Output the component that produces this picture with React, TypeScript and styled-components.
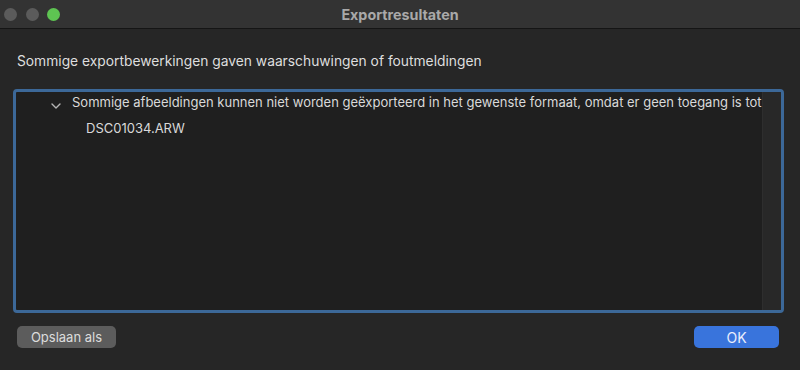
import React from "react";
import styled, { createGlobalStyle } from "styled-components";

const Global = createGlobalStyle`
  html, body { margin: 0; padding: 0; background: #262626; }
  body { font-family: Inter, "Noto Sans", "Liberation Sans", sans-serif; -webkit-font-smoothing: antialiased; }
`;

const Window = styled.div`
  width: 800px;
  height: 370px;
  display: flex;
  flex-direction: column;
  background: #262626;
  overflow: hidden;
`;

const TitleBar = styled.div`
  height: 28px;
  flex: none;
  background: #333333;
  border-bottom: 1px solid #151515;
  display: flex;
  align-items: center;
  position: relative;
  padding-left: 4px;
`;

const Lights = styled.div`
  display: flex;
  gap: 8.5px;
`;

const Light = styled.span<{ $color: string }>`
  width: 13px;
  height: 13px;
  border-radius: 50%;
  background: ${(p) => p.$color};
`;

const Title = styled.div`
  position: absolute;
  left: 0;
  right: 0;
  top: 0;
  bottom: 0;
  display: flex;
  align-items: center;
  justify-content: center;
  font-weight: 700;
  font-size: 14.3px;
  color: #a9a9a9;
  pointer-events: none;
`;

const Body = styled.div`
  flex: 1;
  display: flex;
  flex-direction: column;
  padding: 0 16px 0 13px;
`;

const Message = styled.div`
  font-size: 13.8px;
  color: #dedede;
  padding: 24px 0 0 4px;
  height: 36px;
  box-sizing: border-box;
  line-height: 16px;
`;

const ListBox = styled.div`
  margin-top: 24px;
  height: 224px;
  box-sizing: border-box;
  border: 3px solid #3c6898;
  border-radius: 4px;
  background: #1f1f1f;
  display: flex;
  overflow: hidden;
`;

const ListContent = styled.div`
  flex: 1;
  min-width: 0;
  overflow: hidden;
`;

const Scroller = styled.div`
  width: 18px;
  flex: none;
  background: #282828;
  border-left: 1px solid #2e2e2e;
`;

const Row = styled.div<{ $indent: number }>`
  display: flex;
  align-items: flex-start;
  height: 26px;
  line-height: 20px;
  padding-left: ${(p) => p.$indent}px;
  font-size: 13px;
  color: #d9d9d9;
  white-space: nowrap;
`;

const Chevron = styled.svg`
  width: 10px;
  height: 6px;
  margin: 11px 11px 0 0;
  flex: none;
`;

const Footer = styled.div`
  display: flex;
  justify-content: space-between;
  padding: 13px 5px 0 4px;
`;

const Button = styled.button<{ $primary?: boolean }>`
  height: 22px;
  border: none;
  border-radius: 5px;
  font-family: inherit;
  font-size: ${(p) => (p.$primary ? "14px" : "13px")};
  color: ${(p) => (p.$primary ? "#e9eefc" : "#dcdcdc")};
  background: ${(p) => (p.$primary ? "#3974dc" : "#5c5c5c")};
  width: ${(p) => (p.$primary ? "85px" : "99px")};
  padding: 0;
  display: flex;
  align-items: center;
  justify-content: center;
`;

export default function App() {
  return (
    <>
      <Global />
      <Window>
        <TitleBar>
          <Lights>
            <Light $color="#5b5b5b" />
            <Light $color="#5b5b5b" />
            <Light $color="#5ec452" />
          </Lights>
          <Title>Exportresultaten</Title>
        </TitleBar>
        <Body>
          <Message>Sommige exportbewerkingen gaven waarschuwingen of foutmeldingen</Message>
          <ListBox>
            <ListContent>
              <Row $indent={35}>
                <Chevron viewBox="0 0 10 6">
                  <path d="M1 1 L5 5 L9 1" fill="none" stroke="#b5b5b5" strokeWidth="1.4" strokeLinecap="round" strokeLinejoin="round" />
                </Chevron>
                Sommige afbeeldingen kunnen niet worden geëxporteerd in het gewenste formaat, omdat er geen toegang is tot de originele bestanden
              </Row>
              <Row $indent={70}>DSC01034.ARW</Row>
            </ListContent>
            <Scroller />
          </ListBox>
          <Footer>
            <Button>Opslaan als</Button>
            <Button $primary>OK</Button>
          </Footer>
        </Body>
      </Window>
    </>
  );
}
